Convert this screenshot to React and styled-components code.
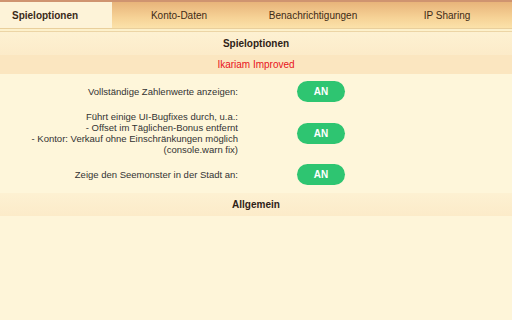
import styled, { createGlobalStyle } from 'styled-components';

const GlobalStyle = createGlobalStyle`
  html, body {
    margin: 0;
    padding: 0;
    background: #fef6da;
    font-family: "Liberation Sans", Arial, sans-serif;
  }
`;

const Page = styled.div`
  width: 512px;
  height: 320px;
  overflow: hidden;
  background: #fef5d9;
`;

const TabBar = styled.div`
  display: flex;
  height: 28px;
  border-top: 2px solid #cf9470;
  background: linear-gradient(#e8b47a, #f6d296 60%, #fbe2aa);
  box-sizing: border-box;
`;

const Tab = styled.div`
  width: ${({ w }) => w}px;
  flex-shrink: 0;
  display: flex;
  align-items: center;
  justify-content: ${({ active }) => (active ? 'flex-start' : 'center')};
  padding-left: ${({ active }) => (active ? '12px' : '0')};
  box-sizing: border-box;
  font-size: 10px;
  font-weight: ${({ active }) => (active ? 'bold' : 'normal')};
  color: ${({ active }) => (active ? '#3a2a18' : '#3e2a16')};
  background: ${({ active }) => (active ? '#fdf3d8' : 'transparent')};
`;

const TabRule = styled.div`
  height: 4px;
  box-sizing: border-box;
  border-top: 1px solid #e9cf9c;
  border-bottom: 1px solid #ecd5a6;
  background: #fdf1cc;
`;

const SectionHead = styled.div`
  height: 23px;
  display: flex;
  align-items: center;
  justify-content: center;
  font-size: 10px;
  font-weight: bold;
  color: #2e2216;
  background: linear-gradient(#fdf1d2, #fcebc9);
`;

const GroupHead = styled.div`
  height: 19px;
  display: flex;
  align-items: center;
  justify-content: center;
  font-size: 10px;
  color: #e8121c;
  background: #fbe6c0;
`;

const Rows = styled.div`
  display: flex;
  flex-direction: column;
  padding: 7px 0 8px;
  gap: 9px;
  background: #fef6da;
`;

const Row = styled.div`
  display: grid;
  grid-template-columns: 240px auto;
  align-items: center;
`;

const Label = styled.div`
  text-align: right;
  font-size: 9.5px;
  line-height: 11px;
  color: #333;
  padding-right: 2px;
`;

const Toggle = styled.div`
  margin-left: 57px;
  width: 48px;
  height: 21px;
  border-radius: 11px;
  background: #2ec571;
  color: #fff;
  font-size: 10px;
  font-weight: bold;
  display: flex;
  align-items: center;
  justify-content: center;
`;

const options = [
  ['Vollständige Zahlenwerte anzeigen:'],
  [
    'Führt einige UI-Bugfixes durch, u.a.:',
    '- Offset im Täglichen-Bonus entfernt',
    '- Kontor: Verkauf ohne Einschränkungen möglich',
    '(console.warn fix)',
  ],
  ['Zeige den Seemonster in der Stadt an:'],
];

const App = () => (
  <Page>
    <GlobalStyle />
    <TabBar>
      <Tab active w={112}>Spieloptionen</Tab>
      <Tab w={134}>Konto-Daten</Tab>
      <Tab w={134}>Benachrichtigungen</Tab>
      <Tab w={134}>IP Sharing</Tab>
    </TabBar>
    <TabRule />
    <SectionHead>Spieloptionen</SectionHead>
    <GroupHead>Ikariam Improved</GroupHead>
    <Rows>
      {options.map((lines, i) => (
        <Row key={i}>
          <Label>
            {lines.map((l) => (
              <div key={l}>{l}</div>
            ))}
          </Label>
          <Toggle>AN</Toggle>
        </Row>
      ))}
    </Rows>
    <SectionHead>Allgemein</SectionHead>
  </Page>
);

export default App;
